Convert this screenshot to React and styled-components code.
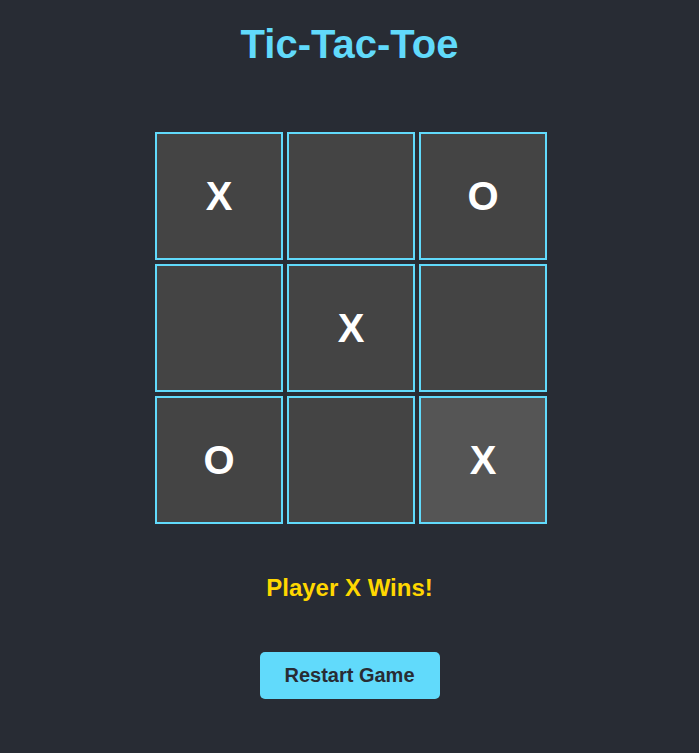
import React from 'react';
import styled, { createGlobalStyle } from 'styled-components';

const GlobalStyle = createGlobalStyle`
  html, body {
    margin: 0;
    padding: 0;
    background-color: #282c34;
  }

  body {
    font-family: "Liberation Sans", Arial, sans-serif;
  }
`;

const StyledApp = styled.div`
  display: flex;
  flex-direction: column;
  align-items: center;
  box-sizing: border-box;

  min-height: 753px;
  padding-top: 22px;

  background-color: #282c34;
`;

const StyledTitle = styled.h1`
  margin: 0 0 65px 0;

  font-weight: bold;
  font-size: 40px;
  color: #61dafb;
`;

const StyledBoard = styled.div`
  display: grid;
  grid-template-columns: repeat(3, 128px);
  grid-template-rows: repeat(3, 128px);
  gap: 4px;

  margin-left: 3px;
`;

const StyledCell = styled.button`
  display: flex;
  align-items: center;
  justify-content: center;
  box-sizing: border-box;

  width: 128px;
  height: 128px;
  padding: 0;
  border: 2px solid #61dafb;

  font-family: "Liberation Sans", Arial, sans-serif;
  font-weight: bold;
  font-size: 40px;
  color: #ffffff;

  background-color: ${({ $active }) => ($active ? '#555555' : '#444444')};
  cursor: pointer;
`;

const StyledStatus = styled.p`
  margin: 50px 0 50px 0;

  font-weight: bold;
  font-size: 24px;
  color: #ffd700;
`;

const StyledRestart = styled.button`
  box-sizing: border-box;

  width: 180px;
  height: 47px;
  padding: 0;
  border: none;
  border-radius: 5px;

  font-family: "Liberation Sans", Arial, sans-serif;
  font-weight: bold;
  font-size: 20px;
  color: #282c34;

  background-color: #61dafb;
  cursor: pointer;
`;

const board = ['X', '', 'O', '', 'X', '', 'O', '', 'X'];

export default function App() {
  return (
    <StyledApp>
      <GlobalStyle />
      <StyledTitle>Tic-Tac-Toe</StyledTitle>
      <StyledBoard>
        {board.map((value, i) => (
          <StyledCell key={i} $active={i === 8}>{value}</StyledCell>
        ))}
      </StyledBoard>
      <StyledStatus>Player X Wins!</StyledStatus>
      <StyledRestart>Restart Game</StyledRestart>
    </StyledApp>
  );
}
